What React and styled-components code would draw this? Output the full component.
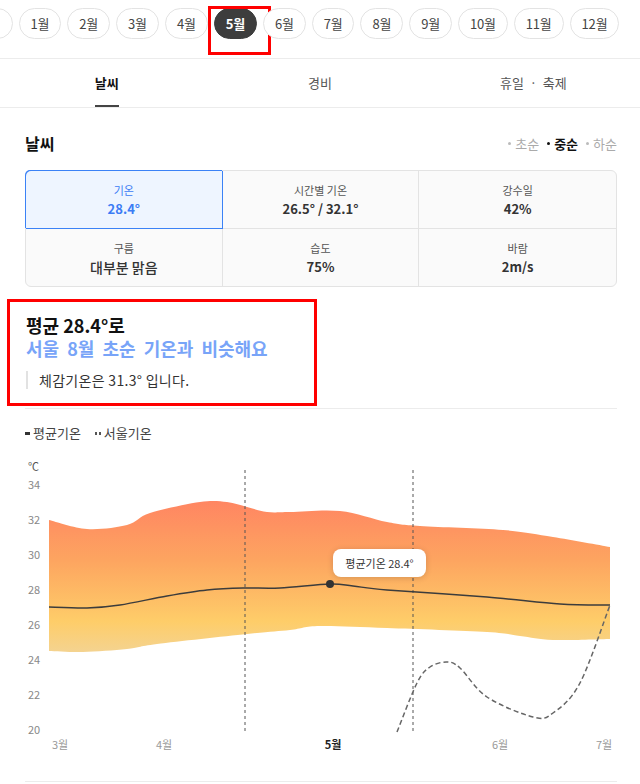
import styled, { createGlobalStyle } from 'styled-components';

const GlobalStyle = createGlobalStyle`
  body {
    margin: 0;
    background: #fff;
    font-family: "Noto Sans CJK KR", "Noto Sans", sans-serif;
    color: #222;
  }
`;

const Page = styled.div`
  width: 640px;
  overflow: hidden;
`;

const MonthBar = styled.div`
  height: 50px;
  padding-top: 8px;
  border-bottom: 1px solid #ececec;
  overflow: hidden;
`;

const MonthRow = styled.div`
  display: flex;
  gap: 6px;
  margin-left: -35px;
`;

const MonthPill = styled.button`
  position: relative;
  flex: none;
  height: 31px;
  padding: 0 11px;
  border-radius: 16px;
  border: 1px solid ${(p) => (p.$active ? '#3d3d3d' : '#e3e3e3')};
  background: ${(p) => (p.$active ? '#3d3d3d' : '#fff')};
  color: ${(p) => (p.$active ? '#fff' : '#444')};
  font-family: inherit;
  font-size: 13px;
  font-weight: ${(p) => (p.$active ? 700 : 400)};
  line-height: 29px;
  letter-spacing: -0.2px;
  &::after {
    content: '';
    display: ${(p) => (p.$marked ? 'block' : 'none')};
    position: absolute;
    left: -7px;
    top: -3px;
    width: 57px;
    height: 43px;
    border: 3px solid #ff0000;
  }
`;

const Tabs = styled.div`
  display: grid;
  grid-template-columns: repeat(3, 1fr);
  height: 48px;
  border-bottom: 1px solid #ececec;
`;

const Tab = styled.div`
  display: flex;
  justify-content: center;
`;

const TabLabel = styled.span`
  display: flex;
  align-items: center;
  height: 46px;
  font-size: 13px;
  font-weight: ${(p) => (p.$active ? 700 : 400)};
  color: ${(p) => (p.$active ? '#111' : '#555')};
  border-bottom: 2px solid ${(p) => (p.$active ? '#444' : 'transparent')};
`;

const Content = styled.div`
  padding: 0 23px 0 25px;
`;

const SectionHead = styled.div`
  display: flex;
  justify-content: space-between;
  align-items: center;
  height: 22px;
  margin-top: 24px;
`;

const SectionTitle = styled.h2`
  margin: 0;
  font-size: 16px;
  font-weight: 700;
  color: #111;
`;

const PeriodList = styled.div`
  display: flex;
  gap: 8px;
  font-size: 13px;
`;

const Period = styled.span`
  display: flex;
  align-items: center;
  gap: 4px;
  color: ${(p) => (p.$active ? '#111' : '#aaa')};
  font-weight: ${(p) => (p.$active ? 700 : 400)};
  &::before {
    content: '';
    width: 3px;
    height: 3px;
    border-radius: 50%;
    background: ${(p) => (p.$active ? '#111' : '#bbb')};
  }
`;

const Table = styled.div`
  display: grid;
  grid-template-columns: repeat(3, 1fr);
  margin-top: 16px;
  border: 1px solid #e3e3e3;
  border-radius: 6px;
  background: #fafafa;
`;

const Cell = styled.div`
  position: relative;
  height: 57px;
  display: flex;
  flex-direction: column;
  align-items: center;
  justify-content: center;
  gap: 2px;
  border-right: 1px solid ${(p) => (p.$selected ? '#3b82f6' : '#e3e3e3')};
  border-bottom: 1px solid ${(p) => (p.$selected ? '#3b82f6' : '#e3e3e3')};
  background: ${(p) => (p.$selected ? '#eef5ff' : 'transparent')};
  box-shadow: ${(p) => (p.$selected ? '-1px -1px 0 0 #3b82f6' : 'none')};
  border-top-left-radius: ${(p) => (p.$selected ? '5px' : '0')};
  z-index: ${(p) => (p.$selected ? 1 : 0)};
  &:nth-child(3n) {
    border-right: none;
  }
  &:nth-child(n + 4) {
    border-bottom: none;
  }
`;

const CellLabel = styled.span`
  font-size: 11px;
  line-height: 16px;
  color: ${(p) => (p.$selected ? '#3b7cf5' : '#555')};
`;

const CellValue = styled.span`
  font-size: ${(p) => (p.$big ? '14px' : '13px')};
  line-height: 18px;
  font-weight: ${(p) => (p.$big ? 500 : 700)};
  color: ${(p) => (p.$selected ? '#3b7cf5' : '#333')};
`;

const Summary = styled.div`
  width: 288px;
  margin: 12px 0 0 -18px;
  padding: 12px 0 14px 16px;
  border: 3px solid #ff0000;
`;

const SummaryTitle = styled.div`
  font-size: 18px;
  line-height: 23px;
  font-weight: 700;
  color: ${(p) => (p.$blue ? '#78a4f8' : '#111')};
  word-spacing: ${(p) => (p.$blue ? '4px' : '0')};
  white-space: nowrap;
`;

const Quote = styled.div`
  margin-top: 11px;
  padding-left: 11px;
  border-left: 2px solid #e2e2e2;
  font-size: 14px;
  line-height: 18px;
  letter-spacing: 0.3px;
  color: #333;
`;

const Divider = styled.hr`
  margin: ${(p) => p.$m || '2px 0 0'};
  border: none;
  border-top: 1px solid #ececec;
`;

const Legend = styled.div`
  display: flex;
  align-items: center;
  gap: 14px;
  margin-top: 15px;
  font-size: 13px;
  line-height: 18px;
  color: #444;
`;

const LegendItem = styled.span`
  display: flex;
  align-items: center;
  gap: 3px;
`;

const LegendMark = styled.span`
  width: ${(p) => (p.$dashed ? '6px' : '5px')};
  height: 3px;
  background: ${(p) =>
    p.$dashed
      ? 'linear-gradient(90deg, #555 0 2px, transparent 2px 4px, #555 4px 6px)'
      : '#333'};
`;

const ChartWrap = styled.div`
  position: relative;
  margin: 13px 0 0 -25px;
  width: 640px;
  height: 320px;
`;

const Tooltip = styled.div`
  position: absolute;
  left: 333px;
  top: 94px;
  width: 93px;
  height: 28px;
  display: flex;
  align-items: center;
  justify-content: center;
  background: #fff;
  border-radius: 8px;
  box-shadow: 0 1px 6px rgba(0, 0, 0, 0.16);
  font-size: 11px;
  color: #333;
`;

const months = ['전체', '1월', '2월', '3월', '4월', '5월', '6월', '7월', '8월', '9월', '10월', '11월', '12월'];

const cells = [
  { label: '기온', value: '28.4°', selected: true },
  { label: '시간별 기온', value: '26.5° / 32.1°' },
  { label: '강수일', value: '42%' },
  { label: '구름', value: '대부분 맑음', big: true },
  { label: '습도', value: '75%' },
  { label: '바람', value: '2m/s' },
];

function segs(pts) {
  let d = '';
  for (let i = 0; i < pts.length - 1; i++) {
    const p0 = pts[i - 1] || pts[i];
    const p1 = pts[i];
    const p2 = pts[i + 1];
    const p3 = pts[i + 2] || p2;
    const c1 = [p1[0] + (p2[0] - p0[0]) / 6, p1[1] + (p2[1] - p0[1]) / 6];
    const c2 = [p2[0] - (p3[0] - p1[0]) / 6, p2[1] - (p3[1] - p1[1]) / 6];
    d += ` C${c1[0].toFixed(1)},${c1[1].toFixed(1)} ${c2[0].toFixed(1)},${c2[1].toFixed(1)} ${p2[0]},${p2[1]}`;
  }
  return d;
}

const upper = [[49, 520], [87, 529], [127, 525], [150, 513], [200, 502], [227, 502], [247, 507], [267, 512], [290, 512], [340, 511], [387, 522], [420, 526], [503, 530], [553, 537], [610, 547]];
const lower = [[610, 639], [553, 640], [520, 636], [487, 632], [387, 628], [320, 626], [290, 630], [247, 634], [157, 644], [127, 649], [83, 652], [49, 651]];
const mean = [[49, 607], [87, 608], [120, 605], [167, 596], [207, 590], [243, 588], [280, 588], [330, 584], [353, 586], [387, 590], [487, 597], [560, 604], [610, 605]];
const seoul = [[397, 732], [417, 683], [430, 667], [447, 662], [460, 668], [487, 697], [533, 717], [553, 713], [580, 683], [610, 605]];

const band = `M49,520${segs(upper)} L610,639${segs(lower)} Z`;
const meanPath = `M49,607${segs(mean)}`;
const seoulPath = `M397,732${segs(seoul)}`;

const yTicks = [34, 32, 30, 28, 26, 24, 22, 20];
const xTicks = [
  { t: '3월', x: 60 },
  { t: '4월', x: 164 },
  { t: '5월', x: 333, bold: true },
  { t: '6월', x: 500 },
  { t: '7월', x: 604 },
];

function Chart() {
  return (
    <ChartWrap>
      <svg width="640" height="320" viewBox="0 455 640 320">
        <defs>
          <linearGradient id="band" x1="0" y1="500" x2="0" y2="652" gradientUnits="userSpaceOnUse">
            <stop offset="0" stopColor="#ff8562" />
            <stop offset="0.4" stopColor="#fda560" />
            <stop offset="0.8" stopColor="#fecd69" />
            <stop offset="1" stopColor="#f4d390" />
          </linearGradient>
        </defs>
        <text x="28" y="471" fontSize="11" fill="#555">℃</text>
        {yTicks.map((v, i) => (
          <text key={v} x="28" y={489 + i * 35} fontSize="11" fill="#888">{v}</text>
        ))}
        <path d={band} fill="url(#band)" />
        <line x1="245" y1="470" x2="245" y2="732" stroke="#555" strokeDasharray="3 3" />
        <line x1="413" y1="470" x2="413" y2="732" stroke="#555" strokeDasharray="3 3" />
        <path d={meanPath} fill="none" stroke="#3c3c3c" strokeWidth="1.5" />
        <path d={seoulPath} fill="none" stroke="#666" strokeWidth="1.5" strokeDasharray="5 3" />
        <circle cx="330" cy="584" r="4" fill="#333" />
        {xTicks.map((x) => (
          <text
            key={x.t}
            x={x.x}
            y="749"
            fontSize="11"
            textAnchor="middle"
            fill={x.bold ? '#222' : '#999'}
            fontWeight={x.bold ? 700 : 400}
          >
            {x.t}
          </text>
        ))}
      </svg>
      <Tooltip>평균기온 28.4°</Tooltip>
    </ChartWrap>
  );
}

export default function App() {
  return (
    <Page>
      <GlobalStyle />
      <MonthBar>
        <MonthRow>
          {months.map((m) => (
            <MonthPill key={m} $active={m === '5월'} $marked={m === '5월'}>
              {m}
            </MonthPill>
          ))}
        </MonthRow>
      </MonthBar>
      <Tabs>
        <Tab>
          <TabLabel $active>날씨</TabLabel>
        </Tab>
        <Tab>
          <TabLabel>경비</TabLabel>
        </Tab>
        <Tab>
          <TabLabel>휴일 &nbsp;·&nbsp; 축제</TabLabel>
        </Tab>
      </Tabs>
      <Content>
        <SectionHead>
          <SectionTitle>날씨</SectionTitle>
          <PeriodList>
            <Period>초순</Period>
            <Period $active>중순</Period>
            <Period>하순</Period>
          </PeriodList>
        </SectionHead>
        <Table>
          {cells.map((c) => (
            <Cell key={c.label} $selected={c.selected}>
              <CellLabel $selected={c.selected}>{c.label}</CellLabel>
              <CellValue $selected={c.selected} $big={c.big}>{c.value}</CellValue>
            </Cell>
          ))}
        </Table>
        <Summary>
          <SummaryTitle>평균 28.4°로</SummaryTitle>
          <SummaryTitle $blue>서울 8월 초순 기온과 비슷해요</SummaryTitle>
          <Quote>체감기온은 31.3° 입니다.</Quote>
        </Summary>
        <Divider />
        <Legend>
          <LegendItem>
            <LegendMark />
            평균기온
          </LegendItem>
          <LegendItem>
            <LegendMark $dashed />
            서울기온
          </LegendItem>
        </Legend>
        <Chart />
        <Divider $m="6px 0 0" />
      </Content>
    </Page>
  );
}
